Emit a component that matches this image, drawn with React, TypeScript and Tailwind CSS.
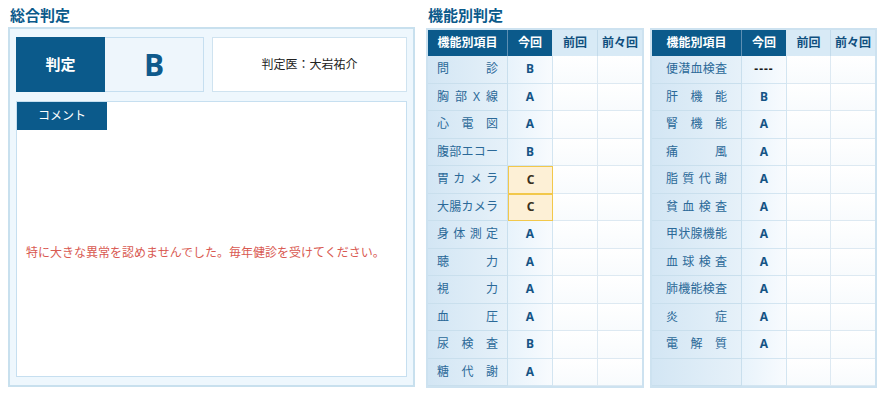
import React from 'react';

const FONT = { fontFamily: '"Noto Sans", "Noto Sans CJK JP", sans-serif' };

type Row = { name: string; now: string };

const left: Row[] = [
  { name: '問診', now: 'B' },
  { name: '胸部X線', now: 'A' },
  { name: '心電図', now: 'A' },
  { name: '腹部エコー', now: 'B' },
  { name: '胃カメラ', now: 'C' },
  { name: '大腸カメラ', now: 'C' },
  { name: '身体測定', now: 'A' },
  { name: '聴力', now: 'A' },
  { name: '視力', now: 'A' },
  { name: '血圧', now: 'A' },
  { name: '尿検査', now: 'B' },
  { name: '糖代謝', now: 'A' },
];

const right: Row[] = [
  { name: '便潜血検査', now: '----' },
  { name: '肝機能', now: 'B' },
  { name: '腎機能', now: 'A' },
  { name: '痛風', now: 'A' },
  { name: '脂質代謝', now: 'A' },
  { name: '貧血検査', now: 'A' },
  { name: '甲状腺機能', now: 'A' },
  { name: '血球検査', now: 'A' },
  { name: '肺機能検査', now: 'A' },
  { name: '炎症', now: 'A' },
  { name: '電解質', now: 'A' },
  { name: '', now: '' },
];

const ResultTable: React.FC<{ rows: Row[]; cols: string; pad: string }> = ({ rows, cols, pad }) => (
  <div className="border-2 border-[#cde2f0] bg-white">
    <div className={`grid ${cols} h-[26px] text-[12px] font-bold`}>
      <div className="flex items-center justify-center bg-[#0b5a8b] text-white border-r border-[#5d8fb3]">機能別項目</div>
      <div className="flex items-center justify-center bg-[#0b5a8b] text-white border-r border-[#d6e8f4]">今回</div>
      <div className="flex items-center justify-center bg-[#d8eaf6] text-[#0f4f7e] border-r border-[#c3dbeb]">前回</div>
      <div className="flex items-center justify-center bg-[#d8eaf6] text-[#0f4f7e]">前々回</div>
    </div>
    {rows.map((r, i) => (
      <div key={i} className={`grid ${cols} h-[27.5px] text-[12px]`}>
        <div className={`flex items-center ${pad} bg-gradient-to-r from-[#d3e6f4] to-[#e6f1f9] border-r border-b border-[#c9dfed] text-[#2b6998]`}>
          <span className="w-full [text-align-last:justify]">{r.name}</span>
        </div>
        <div
          className={
            r.now === 'C'
              ? 'flex items-center justify-center bg-[#fdf0d6] shadow-[inset_0_0_0_1px_#f2c84b] font-bold text-[#3a3020]'
              : 'flex items-center justify-center bg-gradient-to-r from-[#e8f3fb] to-[#f8fbfe] border-r border-b border-[#d3e5f1] font-bold text-[#165485]'
          }
        >
          <span className={r.now === '----' ? 'text-[#1a1a1a] tracking-[1px]' : ''}>{r.now}</span>
        </div>
        <div className="border-r border-b border-[#dde9f2] bg-gradient-to-b from-white to-[#f8fbfd]" />
        <div className="border-b border-[#dde9f2] bg-gradient-to-b from-white to-[#f8fbfd]" />
      </div>
    ))}
  </div>
);

export default function App() {
  return (
    <div className="w-[886px] h-[396px] bg-white flex pl-[8px] gap-[11px]" style={FONT}>
      <div className="w-[407px] flex flex-col">
        <div className="h-[27px] pt-[4px] pl-[2px] text-[15px] leading-[22px] font-bold text-[#0b5a8b]">総合判定</div>
        <div className="h-[360px] border-2 border-[#c8e0ee] bg-[#eef7fd] px-[6px] pt-[8px] pb-[8px] flex flex-col gap-[9px]">
          <div className="flex h-[55px] gap-[8px]">
            <div className="flex">
              <div className="w-[89px] bg-[#0b5a8b] text-white text-[15px] font-bold flex items-center justify-center">判定</div>
              <div className="w-[99px] bg-[#eef6fc] border border-l-0 border-[#c6dff0] flex items-center justify-center text-[30px] font-bold text-[#0f5a8c] leading-none" style={{ fontFamily: '"Open Sans", "Noto Sans", sans-serif' }}>B</div>
            </div>
            <div className="flex-1 bg-white border border-[#cfe3f0] flex items-center justify-center text-[12px] text-[#222]">判定医：大岩祐介</div>
          </div>
          <div className="flex-1 bg-white border border-[#c6dff0] flex flex-col">
            <div className="w-[90px] h-[28px] bg-[#0b5a8b] text-white text-[12px] flex items-center justify-center">コメント</div>
            <div className="flex-1 flex items-center pl-[9px] text-[12px] text-[#d95a52]">
              特に大きな異常を認めませんでした。毎年健診を受けてください。
            </div>
          </div>
        </div>
      </div>
      <div className="flex flex-col">
        <div className="h-[28px] pt-[4px] pl-[2px] text-[15px] leading-[22px] font-bold text-[#0b5a8b]">機能別判定</div>
        <div className="flex gap-[6px] items-start">
          <ResultTable rows={left} cols="grid-cols-[80px_45px_45px_44px]" pad="px-[9px]" />
          <ResultTable rows={right} cols="grid-cols-[90px_45px_44px_44px]" pad="px-[14px]" />
        </div>
      </div>
    </div>
  );
}
